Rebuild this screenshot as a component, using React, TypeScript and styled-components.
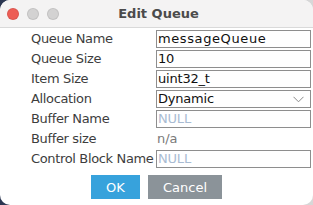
import React from "react";
import styled, { createGlobalStyle } from "styled-components";

const Global = createGlobalStyle`
  html, body { margin: 0; padding: 0; }
  body {
    width: 313px; height: 205px; overflow: hidden;
    background: linear-gradient(to right, #2a3550 0%, #9aa0aa 50%, #d8d8d8 100%);
    font-family: "DejaVu Sans", Verdana, sans-serif;
  }
`;

const Window = styled.div`
  width: 313px;
  height: 205px;
  background: #ffffff;
  border-radius: 10px;
  overflow: hidden;
  display: flex;
  flex-direction: column;
`;

const TitleBar = styled.div`
  height: 27px;
  flex: none;
  background: #f4f3f3;
  border-bottom: 1px solid #d9d9d9;
  display: flex;
  align-items: center;
  position: relative;
`;

const Lights = styled.div`
  display: flex;
  gap: 8px;
  padding-left: 7px;
`;

const Light = styled.span<{ $c: string }>`
  width: 12px;
  height: 12px;
  border-radius: 50%;
  background: ${(p) => p.$c};
  box-sizing: border-box;
  border: 0.5px solid rgba(0, 0, 0, 0.08);
`;

const Title = styled.div`
  position: absolute;
  left: 0;
  right: 0;
  top: 0;
  bottom: 0;
  display: flex;
  align-items: center;
  justify-content: center;
  padding-left: 4px;
  font-weight: bold;
  font-size: 13px;
  color: #4b4b4b;
  pointer-events: none;
`;

const Body = styled.div`
  padding: 2px 2px 0 31px;
  display: flex;
  flex-direction: column;
`;

const Form = styled.div`
  display: grid;
  grid-template-columns: 125px 155px;
  grid-auto-rows: 18px;
  row-gap: 2px;
`;

const Label = styled.div`
  font-size: 13px;
  color: #3d3d3d;
  line-height: 18px;
  white-space: nowrap;
  letter-spacing: -0.35px;
`;

const Field = styled.div<{ $placeholder?: boolean; $wide?: boolean }>`
  box-sizing: border-box;
  height: 18px;
  border: 1px solid #8e8e8e;
  background: #fff;
  font-size: 13px;
  line-height: 16px;
  padding-left: 1px;
  color: ${(p) => (p.$placeholder ? "#a9bcd3" : "#111111")};
  display: flex;
  align-items: center;
  justify-content: space-between;
  white-space: nowrap;
  overflow: hidden;
  letter-spacing: ${(p) => (p.$wide ? "0.6px" : "-0.2px")};
`;

const Plain = styled.div`
  font-size: 13px;
  line-height: 18px;
  color: #7a7a7a;
  padding-left: 1px;
`;

const Chevron = styled.svg`
  width: 11px;
  height: 7px;
  margin-right: 6px;
`;

const Buttons = styled.div`
  display: flex;
  justify-content: center;
  gap: 8px;
  margin-top: 7px;
  margin-left: -29px;
`;

const Button = styled.div<{ $primary?: boolean }>`
  height: 24px;
  width: ${(p) => (p.$primary ? "49px" : "74px")};
  background: ${(p) => (p.$primary ? "#37a2dc" : "#8b9399")};
  color: #ffffff;
  font-size: 13px;
  display: flex;
  align-items: center;
  justify-content: center;
`;

export default function App() {
  return (
    <>
      <Global />
      <Window>
        <TitleBar>
          <Lights>
            <Light $c="#ed5d55" />
            <Light $c="#d3d2d2" />
            <Light $c="#d3d2d2" />
          </Lights>
          <Title>Edit Queue</Title>
        </TitleBar>
        <Body>
          <Form>
            <Label>Queue Name</Label>
            <Field $wide>messageQueue</Field>
            <Label>Queue Size</Label>
            <Field>10</Field>
            <Label>Item Size</Label>
            <Field>uint32_t</Field>
            <Label>Allocation</Label>
            <Field>
              Dynamic
              <Chevron viewBox="0 0 11 7">
                <path d="M0.5 0.8 L5.5 5.8 L10.5 0.8" fill="none" stroke="#8a8a8a" strokeWidth="1" />
              </Chevron>
            </Field>
            <Label>Buffer Name</Label>
            <Field $placeholder>NULL</Field>
            <Label>Buffer size</Label>
            <Plain>n/a</Plain>
            <Label>Control Block Name</Label>
            <Field $placeholder>NULL</Field>
          </Form>
          <Buttons>
            <Button $primary>OK</Button>
            <Button>Cancel</Button>
          </Buttons>
        </Body>
      </Window>
    </>
  );
}
